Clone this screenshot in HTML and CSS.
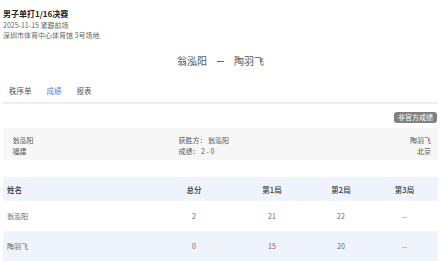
FILE: index.html
```html
<!DOCTYPE html>
<html lang="zh-CN">
<head>
    <meta charset="UTF-8">
    <title>比赛成绩</title>
    <link rel="stylesheet" href="styles.css">
</head>
<body>
    <div class="head">
        <div class="title">男子单打1/16决赛</div>
        <div class="meta meta-date">2025-11-15 紧跟前场</div>
        <div class="meta">深圳市体育中心体育馆 3号场地</div>
    </div>

    <div class="vs">
        <span class="vs-name">翁泓阳</span>
        <span class="vs-dash"></span>
        <span class="vs-name">陶羽飞</span>
    </div>

    <div class="tabs">
        <span class="tab">秩序单</span>
        <span class="tab on">成绩</span>
        <span class="tab">报表</span>
    </div>

    <div class="tools">
        <span class="btn">非官方成绩</span>
    </div>

    <div class="card">
        <div class="card-left">
            <p>翁泓阳</p>
            <p>福建</p>
        </div>
        <div class="card-mid">
            <p>获胜方： 翁泓阳</p>
            <p>成绩： 2 - 0</p>
        </div>
        <div class="card-right">
            <p>陶羽飞</p>
            <p>北京</p>
        </div>
    </div>

    <div class="score">
        <div class="row row-head">
            <span class="cell-name">姓名</span>
            <span>总分</span>
            <span>第1局</span>
            <span>第2局</span>
            <span>第3局</span>
        </div>
        <div class="row">
            <span class="cell-name">翁泓阳</span>
            <span>2</span>
            <span>21</span>
            <span>22</span>
            <span>--</span>
        </div>
        <div class="row row-alt">
            <span class="cell-name">陶羽飞</span>
            <span>0</span>
            <span>15</span>
            <span>20</span>
            <span>--</span>
        </div>
    </div>
</body>
</html>
```

FILE: styles.css
```css
*{
    margin: 0;
    padding: 0;
    box-sizing: border-box;
}
body{
    padding: 0 3px;
    font-family: "Noto Sans CJK SC", "Liberation Sans", sans-serif;
    color: #333;
    background: #fff;
}

/* 顶部信息 */
.head{
    padding-top: 9px;
}
.title{
    font-size: 8px;
    line-height: 10px;
    font-weight: bold;
    color: #222;
}
.meta{
    font-size: 7px;
    line-height: 9.5px;
    color: #666;
}
.meta-date{
    margin-top: 2px;
}

/* 对阵 */
.vs{
    display: flex;
    justify-content: center;
    align-items: center;
    gap: 10px;
    margin-top: 14px;
    font-size: 10px;
    line-height: 14px;
    color: #555;
}
.vs-dash{
    display: inline-block;
    width: 7px;
    height: 1px;
    background: #666;
}

/* 选项卡 */
.tabs{
    display: flex;
    gap: 15px;
    padding: 9px 6px 0;
    height: 29px;
    margin-top: 7px;
    font-size: 7.5px;
    line-height: 14px;
    color: #555;
    border-bottom: 2px solid #eee;
}
.tab.on{
    color: #4f83d8;
}

.tools{
    display: flex;
    justify-content: flex-end;
    padding: 8px 1px 0;
}
.btn{
    display: inline-block;
    height: 11px;
    line-height: 11px;
    padding: 0 4px;
    font-size: 7px;
    color: #fff;
    background: #808080;
    border-radius: 3px;
}

/* 结果卡片 */
.card{
    display: grid;
    grid-template-columns: 166px auto 1fr;
    margin-top: 5px;
    height: 32px;
    padding: 7px 7px 0 9.5px;
    background: #f7f7f7;
    font-size: 7px;
    line-height: 10.5px;
    color: #555;
}
.card-right{
    text-align: right;
}

/* 比分表 */
.score{
    margin-top: 17px;
    font-size: 7px;
    color: #666;
}
.row{
    display: grid;
    grid-template-columns: 152px 78px 78px 60px 67px;
    align-items: center;
    height: 30px;
    text-align: center;
}
.row-head{
    height: 24px;
    background: #eef3fc;
    color: #333;
    font-size: 7.5px;
    font-weight: 500;
}
.row-alt{
    background: #eef3fc;
}
.cell-name{
    text-align: left;
    padding-left: 4px;
}
```
